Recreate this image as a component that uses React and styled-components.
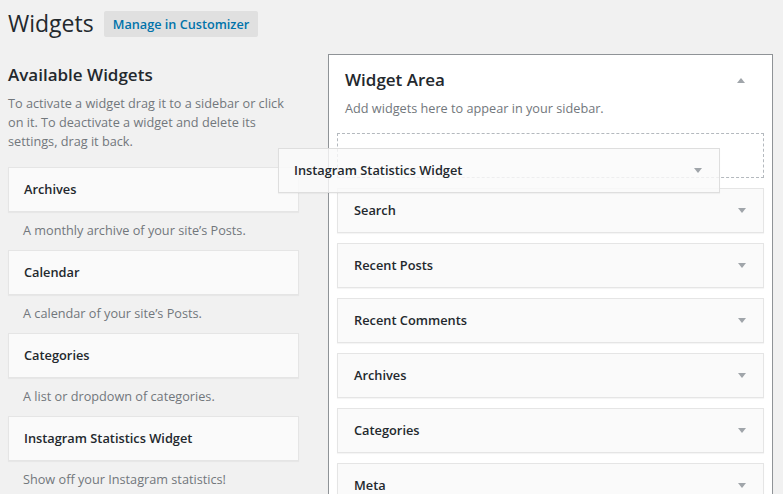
import React from 'react';
import styled, { createGlobalStyle, css } from 'styled-components';

const GlobalStyle = createGlobalStyle`
  html, body {
    margin: 0;
    padding: 0;
    background: #f1f1f1;
    font-family: "Open Sans", "Liberation Sans", sans-serif;
    color: #23282d;
    overflow: hidden;
  }
  * {
    box-sizing: border-box;
  }
`;

const Page = styled.div`
  position: relative;
  width: 783px;
  height: 494px;
  padding: 9px 0 0 8px;
  overflow: hidden;
`;

const Header = styled.div`
  display: flex;
  align-items: center;
  gap: 10px;
`;

const PageTitle = styled.h1`
  margin: 0;
  font-size: 23px;
  line-height: 29px;
  font-weight: 400;
  color: #23282d;
`;

const HeaderButton = styled.a`
  display: inline-block;
  height: 26px;
  padding: 0 9px;
  line-height: 26px;
  font-size: 12.7px;
  font-weight: 600;
  color: #0073aa;
  background: #e0e0e0;
  border-radius: 2px;
  text-decoration: none;
`;

const Columns = styled.div`
  display: flex;
  align-items: flex-start;
  gap: 29px;
  margin-top: 16px;
`;

const LeftColumn = styled.div`
  width: 291px;
  padding-top: 9px;
`;

const SectionTitle = styled.h2`
  margin: 0;
  font-size: 17px;
  line-height: 24px;
  font-weight: 600;
  color: #23282d;
`;

const Description = styled.p`
  margin: 7px 0 0;
  font-size: 12.7px;
  line-height: 19px;
  color: #72777c;
`;

const WidgetList = styled.div`
  margin-top: 16px;
`;

const Arrow = styled.span`
  width: 0;
  height: 0;
  border-left: 4px solid transparent;
  border-right: 4px solid transparent;
  ${({ $up }) =>
    $up
      ? css`border-bottom: 5px solid #a0a5aa;`
      : css`border-top: 5px solid #a0a5aa;`}
`;

const WidgetTop = styled.div`
  display: flex;
  align-items: center;
  justify-content: space-between;
  height: 45px;
  padding: 0 17px 0 15px;
  background: #fafafa;
  border: 1px solid #e5e5e5;
  box-shadow: 0 1px 1px rgba(0, 0, 0, 0.04);
`;

const AreaWidget = styled(WidgetTop)`
  padding-left: 16px;
`;

const WidgetTitle = styled.h3`
  margin: 0;
  font-size: 12.8px;
  line-height: 19px;
  font-weight: 600;
  color: #23282d;
`;

const WidgetDesc = styled.div`
  padding: 9px 15px 10px;
  font-size: 12.7px;
  line-height: 19px;
  color: #72777c;
`;

const SidebarPanel = styled.div`
  width: 445px;
  height: 460px;
  padding: 13px 8px 0;
  background: #fff;
  border: 1px solid #8f9397;
  box-shadow: 0 1px 1px rgba(0, 0, 0, 0.04);
`;

const PanelHead = styled.div`
  display: flex;
  align-items: center;
  justify-content: space-between;
  padding: 0 19px 0 8px;
`;

const PanelDesc = styled(Description)`
  margin: 7px 0 0 8px;
`;

const Stack = styled.div`
  display: flex;
  flex-direction: column;
  gap: 10px;
  margin-top: 15px;
`;

const Placeholder = styled.div`
  height: 45px;
  border: 1px dashed #b4b9be;
`;

const DragHelper = styled(WidgetTop)`
  position: absolute;
  left: 278px;
  top: 148px;
  width: 442px;
  padding-right: 17px;
  background: rgba(250, 250, 250, 0.82);
  border-color: rgba(215, 215, 215, 0.8);
`;

const available = [
  { name: 'Archives', desc: 'A monthly archive of your site’s Posts.' },
  { name: 'Calendar', desc: 'A calendar of your site’s Posts.' },
  { name: 'Categories', desc: 'A list or dropdown of categories.' },
  { name: 'Instagram Statistics Widget', desc: 'Show off your Instagram statistics!' },
];

const areaWidgets = ['Search', 'Recent Posts', 'Recent Comments', 'Archives', 'Categories', 'Meta'];

export default function App() {
  return (
    <Page>
      <GlobalStyle />
      <Header>
        <PageTitle>Widgets</PageTitle>
        <HeaderButton href="#">Manage in Customizer</HeaderButton>
      </Header>
      <Columns>
        <LeftColumn>
          <SectionTitle>Available Widgets</SectionTitle>
          <Description>
            To activate a widget drag it to a sidebar or click on it. To deactivate a widget and
            delete its settings, drag it back.
          </Description>
          <WidgetList>
            {available.map((w) => (
              <div key={w.name}>
                <WidgetTop>
                  <WidgetTitle>{w.name}</WidgetTitle>
                </WidgetTop>
                <WidgetDesc>{w.desc}</WidgetDesc>
              </div>
            ))}
          </WidgetList>
        </LeftColumn>
        <SidebarPanel>
          <PanelHead>
            <SectionTitle>Widget Area</SectionTitle>
            <Arrow $up />
          </PanelHead>
          <PanelDesc>Add widgets here to appear in your sidebar.</PanelDesc>
          <Stack>
            <Placeholder />
            {areaWidgets.map((name) => (
              <AreaWidget key={name}>
                <WidgetTitle>{name}</WidgetTitle>
                <Arrow />
              </AreaWidget>
            ))}
          </Stack>
        </SidebarPanel>
      </Columns>
      <DragHelper>
        <WidgetTitle>Instagram Statistics Widget</WidgetTitle>
        <Arrow />
      </DragHelper>
    </Page>
  );
}
